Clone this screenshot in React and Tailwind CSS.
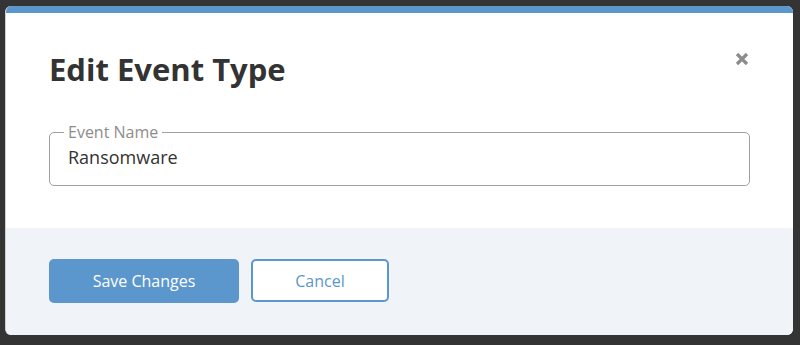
import React from 'react';

const CloseIcon = () => (
  <svg width="14" height="14" viewBox="0 0 14 14" className="text-[#8c8c8c]">
    <path d="M2 2 L12 12 M12 2 L2 12" stroke="currentColor" strokeWidth="3.2" strokeLinecap="butt" />
  </svg>
);

const App = () => {
  return (
    <div className="w-[800px] h-[345px] bg-[#343434] pt-[6px] pl-[5px] font-['Open_Sans',sans-serif] overflow-hidden">
      <div className="w-[788px] h-[329px] flex flex-col rounded-[6px] overflow-hidden bg-white border-l border-[#cfcfcf]">
        {/* top accent bar */}
        <div className="h-[7px] bg-[#5b97cd] shrink-0" />

        <div className="h-[215px] shrink-0 px-[43px] relative">
          <h2 className="pt-[36px] text-[31px] leading-[40px] font-bold text-[#333333]">Edit Event Type</h2>
          <button className="absolute right-[44px] top-[39px] p-0">
            <CloseIcon />
          </button>

          <fieldset className="mt-[36px] h-[61px] border border-[#a0a0a0] rounded-[5px] px-[18px]">
            <legend className="px-[4px] -ml-[4px] text-[16px] leading-[14px] text-[#8d8d8d]">Event Name</legend>
            <div className="pt-[6px] text-[18px] leading-[24px] text-[#333333]">Ransomware</div>
          </fieldset>
        </div>

        <div className="flex-1 bg-[#f0f4f9] px-[43px] pt-[31px] flex gap-[12px] items-start">
          <button className="w-[190px] h-[44px] rounded-[5px] bg-[#5b97cd] text-white text-[16px]">Save Changes</button>
          <button className="w-[138px] h-[43px] rounded-[5px] bg-white border-2 border-[#5b97cd] text-[#5b97cd] text-[16px]">Cancel</button>
        </div>
      </div>
    </div>
  );
};

export default App;
